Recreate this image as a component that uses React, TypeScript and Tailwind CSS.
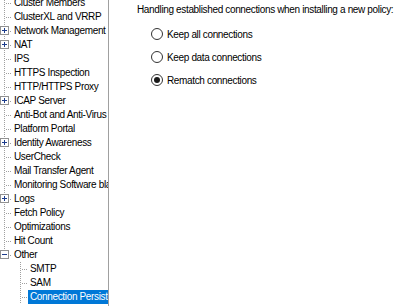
import React from "react";

type Node = {
  label: string;
  level: number;
  expander?: "plus" | "minus";
  last?: boolean;
  selected?: boolean;
};

const tree: Node[] = [
  { label: "Cluster Members", level: 0 },
  { label: "ClusterXL and VRRP", level: 0 },
  { label: "Network Management", level: 0, expander: "plus" },
  { label: "NAT", level: 0, expander: "plus" },
  { label: "IPS", level: 0 },
  { label: "HTTPS Inspection", level: 0 },
  { label: "HTTP/HTTPS Proxy", level: 0 },
  { label: "ICAP Server", level: 0, expander: "plus" },
  { label: "Anti-Bot and Anti-Virus", level: 0 },
  { label: "Platform Portal", level: 0 },
  { label: "Identity Awareness", level: 0, expander: "plus" },
  { label: "UserCheck", level: 0 },
  { label: "Mail Transfer Agent", level: 0 },
  { label: "Monitoring Software blades", level: 0 },
  { label: "Logs", level: 0, expander: "plus" },
  { label: "Fetch Policy", level: 0 },
  { label: "Optimizations", level: 0 },
  { label: "Hit Count", level: 0 },
  { label: "Other", level: 0, expander: "minus", last: true },
  { label: "SMTP", level: 1 },
  { label: "SAM", level: 1 },
  { label: "Connection Persistence", level: 1, selected: true },
];

// dotted tree connector for one 12px wide cell
function Connector({ expander, last }: { expander?: "plus" | "minus"; last?: boolean }) {
  const dots: React.ReactNode[] = [];
  const vEnd = last ? 7 : 14;
  for (let y = 0; y < vEnd; y += 2) dots.push(<rect key={"v" + y} x={4} y={y} width={1} height={1} />);
  for (let x = 6; x < 12; x += 2) dots.push(<rect key={"h" + x} x={x} y={7} width={1} height={1} />);
  return (
    <svg width="12" height="14" viewBox="0 0 12 14" className="shrink-0 block">
      <g fill="#a0a0a0">{dots}</g>
      {expander && (
        <g>
          <rect x={0.5} y={2.5} width={8} height={8} fill="#fff" stroke="#919191" />
          <rect x={2} y={6} width={5} height={1} fill="#1c3c8c" />
          {expander === "plus" && <rect x={4} y={4} width={1} height={5} fill="#1c3c8c" />}
        </g>
      )}
    </svg>
  );
}

function Radio({ checked, label }: { checked?: boolean; label: string }) {
  return (
    <label className="flex items-center gap-[4px] h-[12px]">
      <span className="w-[12px] h-[12px] rounded-full border border-[#333] bg-white flex items-center justify-center shrink-0">
        {checked && <span className="w-[6px] h-[6px] rounded-full bg-[#1a1a1a]" />}
      </span>
      <span>{label}</span>
    </label>
  );
}

export default function App() {
  return (
    <div
      className="w-[400px] h-[306px] bg-white flex overflow-hidden text-[10px] tracking-[-0.35px] text-black"
      style={{ fontFamily: '"Liberation Sans", Arial, sans-serif' }}
    >
      {/* Tree */}
      <div className="w-[109px] h-full border-r border-[#a0a0a0] overflow-hidden shrink-0">
        <div className="-mt-[4px] flex flex-col">
          {tree.map((n) => (
            <div key={n.label} className="flex h-[14px] items-center whitespace-nowrap">
              {n.level > 0 && <div className="w-[16px] shrink-0" />}
              <Connector expander={n.expander} last={n.last} />
              <span
                className={
                  "px-[2px] h-[14px] leading-[14px] " +
                  (n.selected ? "bg-[#0078d7] text-white" : "")
                }
              >
                {n.label}
              </span>
            </div>
          ))}
        </div>
      </div>

      {/* Options */}
      <div className="flex-1 pl-[28px] pt-[3px] whitespace-nowrap">
        <div className="leading-[14px]">Handling established connections when installing a new policy:</div>
        <div className="mt-[11px] pl-[14px] flex flex-col gap-[11px]">
          <Radio label="Keep all connections" />
          <Radio label="Keep data connections" />
          <Radio label="Rematch connections" checked />
        </div>
      </div>
    </div>
  );
}
